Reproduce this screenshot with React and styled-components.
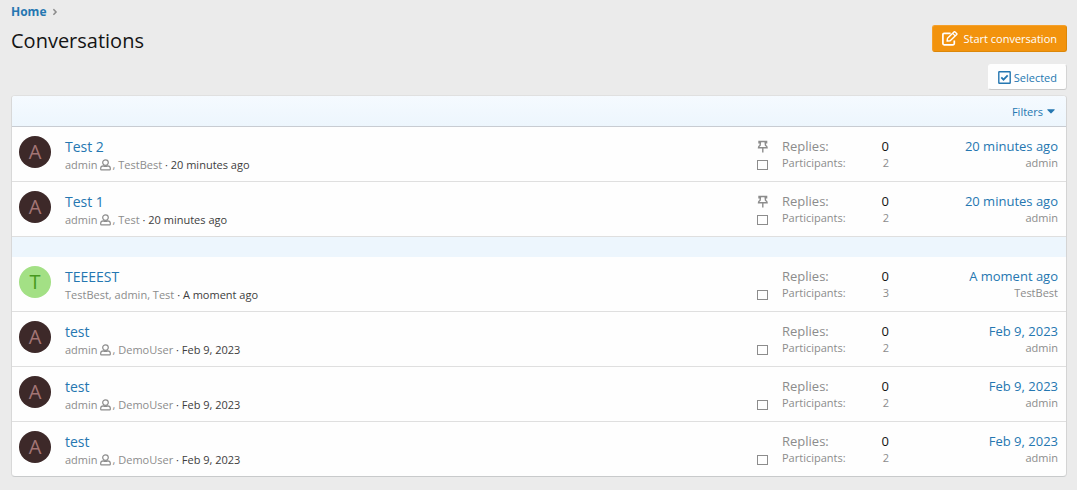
import React from "react";
import styled, { createGlobalStyle } from "styled-components";
import { FaAngleRight } from "react-icons/fa";

const GlobalStyle = createGlobalStyle`
  * {
    box-sizing: border-box;
  }
  body {
    margin: 0;
    background: #ebebeb;
    color: #141414;
    font-family: "Open Sans", "Noto Sans", sans-serif;
    font-size: 13px;
    line-height: 18px;
  }
  a {
    color: #2577b1;
    text-decoration: none;
  }
  a:hover {
    text-decoration: underline;
  }
`;

const Page = styled.main`
  padding: 3px 10px 13px 11px;
`;

const Breadcrumb = styled.nav`
  display: flex;
  align-items: center;
  gap: 4px;
  font-size: 12px;
  font-weight: 700;
  color: #8c8c8c;
  svg {
    font-size: 10px;
  }
`;

const Header = styled.header`
  display: flex;
  justify-content: space-between;
  align-items: flex-start;
  margin-top: 4px;
`;

const Title = styled.h1`
  margin: 0;
  font-size: 20px;
  line-height: 32px;
  font-weight: 400;
`;

const Button = styled.button`
  display: inline-flex;
  align-items: center;
  justify-content: center;
  gap: ${(props) => (props.$primary ? "5px" : "3px")};
  height: ${(props) => (props.$primary ? "27px" : "26px")};
  padding: 0 9px;
  border: 1px solid;
  border-color: ${(props) =>
    props.$primary ? "#f5a02a #dc8709 #dc8709 #f5a02a" : "#fefefe #d4d4d4 #c8c8c8 #fefefe"};
  border-radius: 3px;
  background: ${(props) => (props.$primary ? "#f2930d" : "#fefefe")};
  color: ${(props) => (props.$primary ? "#fff" : "#2577b1")};
  font-family: inherit;
  font-size: 11px;
  cursor: pointer;
  svg {
    flex: none;
  }
`;

const Actions = styled.div`
  display: flex;
  justify-content: flex-end;
  margin: 7px 0 5px;
`;

const Block = styled.section`
  border: 1px solid;
  border-color: #e0e0e0 #d4d4d4 #c8cacb #d8d8d8;
  border-radius: 4px;
  background: #fefefe;
  overflow: hidden;
`;

const FilterBar = styled.div`
  display: flex;
  justify-content: flex-end;
  height: 31px;
  padding: 0 11px;
  border-bottom: 1px solid #c8ccd2;
  background: linear-gradient(#f5faff, #edf6fd);
`;

const FilterButton = styled.button`
  display: flex;
  align-items: center;
  gap: 4px;
  padding: 1px 0 0;
  border: 0;
  background: none;
  color: #2577b1;
  font-family: inherit;
  font-size: 11px;
  cursor: pointer;
`;

const List = styled.ul`
  margin: 0;
  padding: 0;
  list-style: none;
  & + & {
    border-top: 20px solid #edf6fd;
  }
`;

const Row = styled.li`
  display: grid;
  grid-template-columns: 46px minmax(0, 1fr) 25px 107px 169px;
  height: 55px;
  padding: 0 8px 0 7px;
  border-bottom: 1px solid #dfdfdf;
  ${List}:last-child &:last-child {
    height: 54px;
    border-bottom: 0;
  }
`;

const Avatar = styled.a`
  width: 32px;
  height: 32px;
  margin-top: 9px;
  border-radius: 50%;
  background: ${(props) => (props.$green ? "#a3e085" : "#3d2929")};
  && {
    color: ${(props) => (props.$green ? "#47991f" : "#a37575")};
  }
  font-size: 20px;
  line-height: 32px;
  text-align: center;
`;

const Main = styled.div`
  padding-top: 9px;
`;

const Subject = styled.a`
  display: block;
  width: fit-content;
  font-size: 14px;
  line-height: 21px;
`;

const Minor = styled.div`
  color: #8c8c8c;
  font-size: 11px;
  line-height: 16px;
  white-space: nowrap;
  a {
    color: inherit;
  }
  time {
    color: #3d3d3d;
  }
  svg {
    margin: 0 2px;
    vertical-align: -2px;
  }
`;

const Flags = styled.div`
  display: flex;
  flex-direction: column;
  justify-content: flex-end;
  gap: 7px;
  height: 43px;
`;

const Check = styled.input`
  appearance: none;
  width: 11px;
  height: 10px;
  margin: 0;
  border: 1px solid #8c8c8c;
  background: #fefefe;
  &:checked {
    background: #2577b1;
  }
`;

const Stats = styled.dl`
  margin: 0;
  padding-top: 10px;
`;

const Stat = styled.div`
  display: flex;
  justify-content: space-between;
  color: #8c8c8c;
  font-size: ${(props) => (props.$minor ? "11px" : "13px")};
  line-height: ${(props) => (props.$minor ? "16px" : "18px")};
  dd {
    margin: 0;
    color: ${(props) => (props.$minor ? "#8c8c8c" : "#141414")};
  }
`;

const Latest = styled.div`
  padding-top: 10px;
  text-align: right;
`;

const EditIcon = () => (
  <svg width="16" height="15" viewBox="0 0 16 15" fill="none" stroke="currentColor" strokeLinejoin="round" aria-hidden="true">
    <path d="M8.6 2.4H2.1q-1.2 0-1.2 1.2v9q0 1.2 1.2 1.2h9q1.2 0 1.2-1.2V9.6" strokeWidth="1.7" />
    <path d="m5.1 10.1.4-2.8L12 .9q.5-.4 1 0l1.7 1.6q.5.5 0 1L8.2 9.8z" strokeWidth="1.4" />
    <path d="m10.7 2.4 2.5 2.5" strokeWidth="1.2" />
  </svg>
);

const CheckIcon = () => (
  <svg width="13" height="13" viewBox="0 0 13 13" fill="none" stroke="currentColor" aria-hidden="true">
    <rect x="0.8" y="0.8" width="11.4" height="11.4" rx="0.5" strokeWidth="1.4" />
    <path d="M3.3 6.4 5.5 8.6 9.7 4.3" strokeWidth="1.8" />
  </svg>
);

const CaretIcon = () => (
  <svg width="8" height="5" viewBox="0 0 8 5" fill="currentColor" aria-hidden="true">
    <path d="M.6.2h6.8q.6.2.2.7L4.4 4.3q-.4.3-.8 0L.4.9Q0 .4.6.2z" />
  </svg>
);

const UserIcon = () => (
  <svg width="11" height="12" viewBox="0 0 11 12" fill="none" stroke="currentColor" strokeWidth="1.2" aria-hidden="true">
    <circle cx="5.5" cy="3.6" r="2.8" />
    <path d="M3.4 6.9C1.6 7 .7 7.9.7 9.2v1q0 .7.7.7h8.2q.7 0 .7-.7v-1c0-1.3-.9-2.2-2.7-2.3q-2.1 1-4.2 0z" />
  </svg>
);

const PinIcon = () => (
  <svg width="11" height="13" viewBox="0 0 11 13" fill="none" stroke="#8c8c8c" strokeWidth="1.4" aria-label="Sticky">
    <path d="M2 1.5h7.6v1.2H8.2l.3 2.6c1.1.5 1.6 1.2 1.6 2.4H1.5c0-1.2.5-1.9 1.6-2.4l.3-2.6H2z" />
    <path d="M5.8 8v4.4" />
  </svg>
);

const sticky = [
  { id: 1, title: "Test 2", others: ["TestBest"], date: "20 minutes ago", count: 2 },
  { id: 2, title: "Test 1", others: ["Test"], date: "20 minutes ago", count: 2 },
];

const normal = [
  { id: 3, title: "TEEEEST", starter: "TestBest", others: ["admin", "Test"], date: "A moment ago", count: 3 },
  { id: 4, title: "test", others: ["DemoUser"], date: "Feb 9, 2023", count: 2 },
  { id: 5, title: "test", others: ["DemoUser"], date: "Feb 9, 2023", count: 2 },
  { id: 6, title: "test", others: ["DemoUser"], date: "Feb 9, 2023", count: 2 },
];

const Conversation = ({ item, pinned }) => {
  const starter = item.starter || "admin";
  return (
    <Row>
      <Avatar href="#" $green={starter === "TestBest"}>
        {starter[0].toUpperCase()}
      </Avatar>
      <Main>
        <Subject href="#">{item.title}</Subject>
        <Minor>
          <a href="#">{starter}</a>
          {starter === "admin" && <UserIcon />}
          {item.others.map((name) => (
            <React.Fragment key={name}>
              , <a href="#">{name}</a>
            </React.Fragment>
          ))}{" "}
          <time>· {item.date}</time>
        </Minor>
      </Main>
      <Flags>
        {pinned && <PinIcon />}
        <Check type="checkbox" aria-label="Select conversation" />
      </Flags>
      <Stats>
        <Stat>
          <dt>Replies:</dt>
          <dd>0</dd>
        </Stat>
        <Stat $minor>
          <dt>Participants:</dt>
          <dd>{item.count}</dd>
        </Stat>
      </Stats>
      <Latest>
        <a href="#">{item.date}</a>
        <Minor>
          <a href="#">{starter}</a>
        </Minor>
      </Latest>
    </Row>
  );
};

const App = () => {
  return (
    <>
      <GlobalStyle />
      <Page>
        <Breadcrumb>
          <a href="#">Home</a>
          <FaAngleRight />
        </Breadcrumb>
        <Header>
          <Title>Conversations</Title>
          <Button type="button" $primary>
            <EditIcon />
            Start conversation
          </Button>
        </Header>
        <Actions>
          <Button type="button">
            <CheckIcon />
            Selected
          </Button>
        </Actions>
        <Block>
          <FilterBar>
            <FilterButton type="button">
              Filters
              <CaretIcon />
            </FilterButton>
          </FilterBar>
          <List>
            {sticky.map((item) => (
              <Conversation key={item.id} item={item} pinned />
            ))}
          </List>
          <List>
            {normal.map((item) => (
              <Conversation key={item.id} item={item} />
            ))}
          </List>
        </Block>
      </Page>
    </>
  );
};

export default App;
